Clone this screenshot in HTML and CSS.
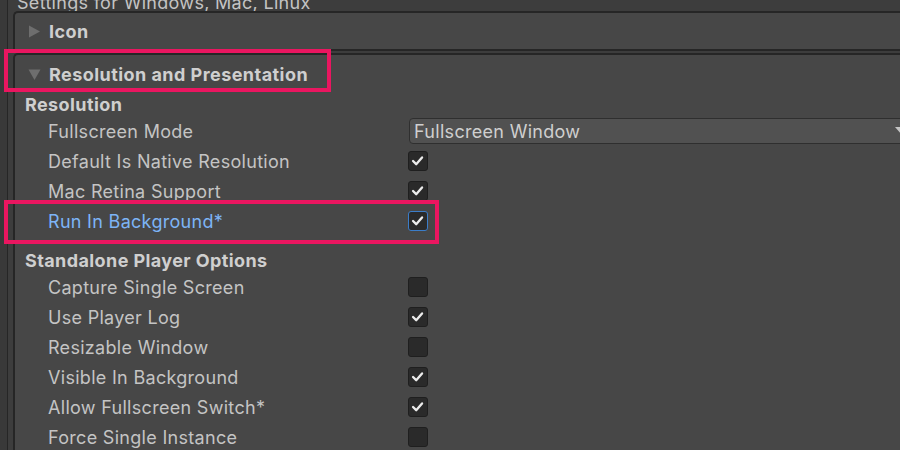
FILE: index.html
```html
<!DOCTYPE html>
<html>
<head>
<meta charset="utf-8">
<link rel="stylesheet" href="styles.css">
</head>
<body>
<div class="window">
  <div class="strip"></div>
  <div class="main">
    <div class="title"><span>Settings for Windows, Mac, Linux</span></div>
    <div class="foldout closed">
      <div class="fold-header">
        <svg class="tri" width="13" height="13" viewBox="0 0 13 13"><path d="M1 0.5 L12 6.5 L1 12.5 Z" fill="#6e6e6e"/></svg>
        <span>Icon</span>
      </div>
    </div>
    <div class="foldout open">
      <div class="fold-header">
        <svg class="tri" width="13" height="13" viewBox="0 0 13 13"><path d="M0.5 1.5 L12.5 1.5 L6.5 12 Z" fill="#6e6e6e"/></svg>
        <span>Resolution and Presentation</span>
        <div class="highlight hl-header"></div>
      </div>
      <div class="section">Resolution</div>
      <div class="row">
        <span class="label">Fullscreen Mode</span>
        <div class="dropdown"><span>Fullscreen Window</span><svg class="arrow" width="12" height="8" viewBox="0 0 12 8"><path d="M0 0 L12 0 L6 7 Z" fill="#c4c4c4"/></svg></div>
      </div>
      <div class="row">
        <span class="label">Default Is Native Resolution</span>
        <span class="check on"><svg viewBox="0 0 20 20"><path d="M4.5 10 L8 13.5 L14.5 6"/></svg></span>
      </div>
      <div class="row">
        <span class="label">Mac Retina Support</span>
        <span class="check on"><svg viewBox="0 0 20 20"><path d="M4.5 10 L8 13.5 L14.5 6"/></svg></span>
      </div>
      <div class="row">
        <span class="label modified">Run In Background*</span>
        <span class="check on focus"><svg viewBox="0 0 20 20"><path d="M4.5 10 L8 13.5 L14.5 6"/></svg></span>
        <div class="highlight hl-row"></div>
      </div>
      <div class="section gap">Standalone Player Options</div>
      <div class="row">
        <span class="label">Capture Single Screen</span>
        <span class="check"></span>
      </div>
      <div class="row">
        <span class="label">Use Player Log</span>
        <span class="check on"><svg viewBox="0 0 20 20"><path d="M4.5 10 L8 13.5 L14.5 6"/></svg></span>
      </div>
      <div class="row">
        <span class="label">Resizable Window</span>
        <span class="check"></span>
      </div>
      <div class="row">
        <span class="label">Visible In Background</span>
        <span class="check on"><svg viewBox="0 0 20 20"><path d="M4.5 10 L8 13.5 L14.5 6"/></svg></span>
      </div>
      <div class="row">
        <span class="label">Allow Fullscreen Switch*</span>
        <span class="check on"><svg viewBox="0 0 20 20"><path d="M4.5 10 L8 13.5 L14.5 6"/></svg></span>
      </div>
      <div class="row">
        <span class="label">Force Single Instance</span>
        <span class="check"></span>
      </div>
    </div>
  </div>
</div>
</body>
</html>
```

FILE: styles.css
```css
html, body {
  margin: 0;
  padding: 0;
  height: 100%;
  overflow: hidden;
  background: #3c3c3c;
}
body {
  font-family: "Inter", "DejaVu Sans", sans-serif;
  font-size: 18px;
  color: #c4c4c4;
}
.window {
  display: flex;
  height: 450px;
}
.strip {
  width: 7px;
  flex: none;
  background: #393939;
  border-right: 1px solid #262626;
}
.main {
  flex: 1;
  min-width: 0;
  padding-left: 5px;
  background: #3d3d3d;
}
.title {
  height: 11px;
  overflow: hidden;
  padding-left: 4px;
  letter-spacing: 0.3px;
}
.title span {
  display: block;
  line-height: 11px;
  margin-top: -3px;
  white-space: nowrap;
}
.foldout {
  border: 2px solid #262626;
  border-right: none;
  border-top-left-radius: 5px;
  background: #474747;
  position: relative;
}
.foldout.closed {
  height: 36px;
  margin-bottom: 2px;
}
.foldout.open {
  border-bottom: none;
  height: 600px;
}
.fold-header {
  height: 37px;
  box-sizing: border-box;
  padding-top: 2px;
  display: flex;
  align-items: center;
  position: relative;
  font-weight: 700;
  color: #cfcfcf;
  letter-spacing: 0.45px;
}
.foldout.closed .fold-header {
  height: 36px;
  padding-top: 0;
}
.fold-header .tri {
  margin-left: 13px;
  margin-right: 8px;
  flex: none;
}
.section {
  height: 23px;
  line-height: 23px;
  padding-top: 1px;
  padding-left: 10px;
  font-weight: 700;
  color: #cfcfcf;
  letter-spacing: 0.4px;
}
.section.gap {
  margin-top: 12px;
}
.row {
  height: 30px;
  display: grid;
  grid-template-columns: 360px auto;
  align-items: center;
  padding-left: 33px;
  position: relative;
}
.label {
  white-space: nowrap;
  letter-spacing: 0.3px;
}
.label.modified {
  color: #7db4f6;
}
.check {
  width: 20px;
  height: 20px;
  box-sizing: border-box;
  border: 1px solid #1f1f1f;
  border-radius: 3px;
  background: #2a2a2a;
  display: block;
}
.check svg {
  display: block;
  width: 18px;
  height: 18px;
}
.check path {
  fill: none;
  stroke: #ececec;
  stroke-width: 2.6;
  stroke-linecap: round;
  stroke-linejoin: round;
}
.check.focus {
  border: 1px solid #3b7dc9;
}
.dropdown {
  width: 503px;
  height: 26px;
  box-sizing: border-box;
  margin-left: 1px;
  background: #515151;
  border: 1px solid #2f2f2f;
  border-radius: 4px;
  display: flex;
  align-items: center;
  justify-content: space-between;
  padding: 0 4px 0 4px;
  color: #cfcfcf;
  letter-spacing: 0.3px;
}
.highlight {
  position: absolute;
  border: 4px solid #ea1660;
  box-sizing: border-box;
  pointer-events: none;
}
.hl-header {
  left: -11px;
  top: -6px;
  width: 327px;
  height: 43px;
}
.hl-row {
  left: -11px;
  top: -6px;
  width: 435px;
  height: 44px;
}
```
